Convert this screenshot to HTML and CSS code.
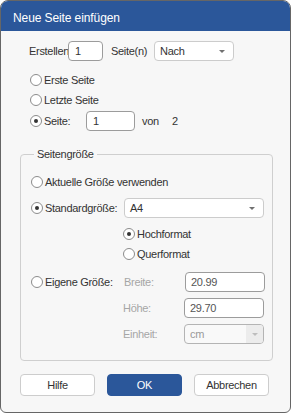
FILE: index.html
```html
<!DOCTYPE html>
<html lang="de">
<head>
<meta charset="UTF-8" />
<title>Neue Seite einfügen</title>
<link rel="stylesheet" href="styles.css">
</head>
<body>

<div class="dialog">
  <div class="titlebar">Neue Seite einfügen</div>

  <div class="top">
    <div class="row first">
      <span class="lbl-create">Erstellen</span>
      <span class="field w-count">1</span>
      <span class="lbl-pages">Seite(n)</span>
      <span class="select w-where">Nach <i class="arrow"></i></span>
    </div>

    <div class="row radio-list">
      <span class="radio"></span><span>Erste Seite</span>
    </div>
    <div class="row">
      <span class="radio"></span><span>Letzte Seite</span>
    </div>
    <div class="row page-row">
      <span class="radio checked"></span><span class="lbl-page">Seite:</span>
      <span class="field w-page">1</span>
      <span class="lbl-of">von</span><span>2</span>
    </div>
  </div>

  <fieldset class="group">
    <legend>Seitengröße</legend>

    <div class="row current">
      <span class="radio"></span><span>Aktuelle Größe verwenden</span>
    </div>

    <div class="row gap6">
      <span class="radio checked"></span><span class="lbl-size">Standardgröße:</span>
      <span class="select w-size">A4 <i class="arrow"></i></span>
    </div>

    <div class="row gap6 indent">
      <span class="radio checked"></span><span>Hochformat</span>
    </div>
    <div class="row indent">
      <span class="radio"></span><span>Querformat</span>
    </div>

    <div class="row custom">
      <span class="radio"></span><span class="lbl-size">Eigene Größe:</span>
      <span class="lbl-dim muted">Breite:</span>
      <span class="field w-dim value">20.99</span>
    </div>
    <div class="row gap6 dim-row">
      <span class="lbl-dim muted">Höhe:</span>
      <span class="field w-dim value">29.70</span>
    </div>
    <div class="row gap6 dim-row">
      <span class="lbl-dim muted">Einheit:</span>
      <span class="select disabled w-dim">cm <i class="arrow-box"><i class="arrow"></i></i></span>
    </div>
  </fieldset>

  <div class="buttons">
    <button class="btn">Hilfe</button>
    <button class="btn btn-primary">OK</button>
    <button class="btn">Abbrechen</button>
  </div>
</div>

</body>
</html>
```

FILE: styles.css
```css
/* Base */
*, *::before, *::after {
  box-sizing: border-box;
}
body {
  margin: 0;
  background: #ffffff;
  font-family: "Liberation Sans", Arial, sans-serif;
  font-size: 11px;
  letter-spacing: -0.3px;
  color: #333333;
}

/* Window */
.dialog {
  width: 291px;
  height: 413px;
  border: 1px solid #666666;
  border-radius: 8px 8px 6px 6px;
  overflow: hidden;
  background: #f7f7f7;
  display: flex;
  flex-direction: column;
}
.titlebar {
  height: 30px;
  padding: 4px 0 0 12px;
  line-height: 26px;
  background: #2b579a;
  color: #ffffff;
  font-size: 12px;
  letter-spacing: -0.1px;
}

/* Rows */
.top {
  padding-left: 28px;
}
.row {
  display: flex;
  align-items: center;
  height: 20px;
}
.row.first {
  margin-top: 10px;
}
.row.radio-list {
  margin-top: 9px;
}
.row.page-row {
  margin-top: 1px;
}
.row .radio {
  margin: 0 2px 0 1px;
}

.lbl-create { width: 39px; }
.lbl-pages { width: 43px; margin-left: 8px; }
.lbl-page { width: 42px; }
.lbl-of { width: 30px; margin-left: 7px; }
.lbl-size { width: 79px; }
.lbl-dim { width: 61px; }
.muted { color: #a6a6a6; }

/* Controls */
.field {
  height: 20px;
  display: flex;
  align-items: center;
  padding-left: 6px;
  background: #ffffff;
  border: 1px solid #9c9c9c;
  border-radius: 4px;
}
.field.value {
  padding-left: 5px;
  color: #555555;
}
.select {
  height: 20px;
  display: flex;
  align-items: center;
  justify-content: space-between;
  padding: 0 8px 0 5px;
  background: #ffffff;
  border: 1px solid #cccccc;
  border-radius: 4px;
}
.select.disabled {
  padding-right: 0;
  color: #9a9a9a;
  background: #f9f9f9;
  border-color: #b4b4b4;
}
.arrow {
  width: 0;
  height: 0;
  border-left: 3px solid transparent;
  border-right: 3px solid transparent;
  border-top: 3px solid #707070;
}
.arrow-box {
  width: 17px;
  height: 18px;
  display: flex;
  align-items: center;
  justify-content: center;
  background: #ececec;
  border-radius: 0 3px 3px 0;
}
.arrow-box .arrow {
  border-top-color: #bdbdbd;
}
.w-count { width: 35px; }
.w-where { width: 80px; }
.w-page { width: 49px; }
.w-size { width: 140px; }
.w-dim { width: 80px; }

.radio {
  width: 12px;
  height: 12px;
  flex: none;
  border: 1px solid #8c8c8c;
  border-radius: 50%;
  background: #ffffff;
  display: flex;
  align-items: center;
  justify-content: center;
}
.radio.checked::after {
  content: "";
  width: 4px;
  height: 4px;
  border-radius: 50%;
  background: #333333;
}

/* Page size group */
fieldset.group {
  margin: 16px 17px 0 19px;
  padding: 0 0 16px 9px;
  min-width: 0;
  border: 1px solid #cfcfcf;
  border-radius: 4px;
}
fieldset.group legend {
  margin-left: 4px;
  padding: 0 3px;
  line-height: 14px;
}
.row.current {
  margin-top: 11px;
}
.row.gap6 {
  margin-top: 6px;
}
.row.indent {
  padding-left: 93px;
}
.row.indent .radio {
  margin-left: 0;
}
.row.custom {
  margin-top: 8px;
}
.row.dim-row {
  padding-left: 93px;
}

/* Buttons */
.buttons {
  display: flex;
  gap: 12px;
  margin: 13px 0 0 19px;
}
.btn {
  width: 75px;
  height: 22px;
  padding: 0;
  font-family: inherit;
  font-size: 11px;
  letter-spacing: -0.3px;
  color: #333333;
  background: #ffffff;
  border: 1px solid #cdcdcd;
  border-radius: 4px;
}
.btn-primary {
  color: #ffffff;
  background: #2b579a;
  border-color: #2b579a;
}
```
